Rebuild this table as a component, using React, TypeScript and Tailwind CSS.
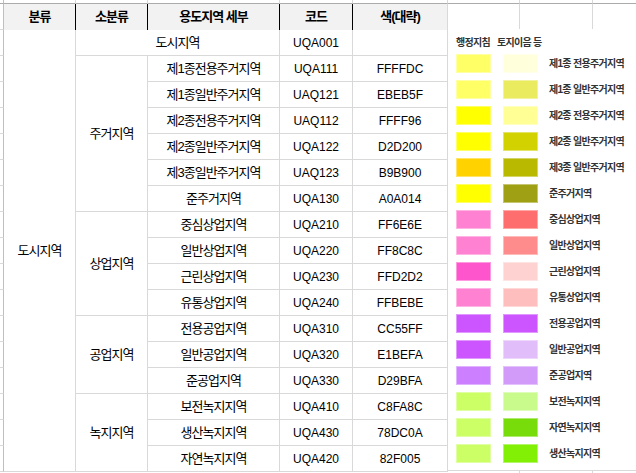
type Item = { name: string; code: string; hex: string };

type Group = { name: string; items: Item[] };

const groups: Group[] = [
  {
    name: '주거지역',
    items: [
      { name: '제1종전용주거지역', code: 'UQA111', hex: 'FFFFDC' },
      { name: '제1종일반주거지역', code: 'UAQ121', hex: 'EBEB5F' },
      { name: '제2종전용주거지역', code: 'UAQ112', hex: 'FFFF96' },
      { name: '제2종일반주거지역', code: 'UQA122', hex: 'D2D200' },
      { name: '제3종일반주거지역', code: 'UAQ123', hex: 'B9B900' },
      { name: '준주거지역', code: 'UQA130', hex: 'A0A014' },
    ],
  },
  {
    name: '상업지역',
    items: [
      { name: '중심상업지역', code: 'UQA210', hex: 'FF6E6E' },
      { name: '일반상업지역', code: 'UQA220', hex: 'FF8C8C' },
      { name: '근린상업지역', code: 'UQA230', hex: 'FFD2D2' },
      { name: '유통상업지역', code: 'UQA240', hex: 'FFBEBE' },
    ],
  },
  {
    name: '공업지역',
    items: [
      { name: '전용공업지역', code: 'UQA310', hex: 'CC55FF' },
      { name: '일반공업지역', code: 'UQA320', hex: 'E1BEFA' },
      { name: '준공업지역', code: 'UQA330', hex: 'D29BFA' },
    ],
  },
  {
    name: '녹지지역',
    items: [
      { name: '보전녹지지역', code: 'UQA410', hex: 'C8FA8C' },
      { name: '생산녹지지역', code: 'UQA430', hex: '78DC0A' },
      { name: '자연녹지지역', code: 'UQA420', hex: '82F005' },
    ],
  },
];

// legend picture pasted next to the table: 행정지침 colour / 토지이음 colour
const legend = [
  { label: '제1종 전용주거지역', a: 'bg-[#ffff66]', b: 'bg-[#ffffdc]' },
  { label: '제1종 일반주거지역', a: 'bg-[#ffff66]', b: 'bg-[#ebeb5f]' },
  { label: '제2종 전용주거지역', a: 'bg-[#ffff00]', b: 'bg-[#ffff96]' },
  { label: '제2종 일반주거지역', a: 'bg-[#ffff00]', b: 'bg-[#d2d200]' },
  { label: '제3종 일반주거지역', a: 'bg-[#ffd200]', b: 'bg-[#b9b900]' },
  { label: '준주거지역', a: 'bg-[#ffff00]', b: 'bg-[#a0a014]' },
  { label: '중심상업지역', a: 'bg-[#ff82d2]', b: 'bg-[#ff6e6e]' },
  { label: '일반상업지역', a: 'bg-[#ff82d2]', b: 'bg-[#ff8c8c]' },
  { label: '근린상업지역', a: 'bg-[#ff55cc]', b: 'bg-[#ffd2d2]' },
  { label: '유통상업지역', a: 'bg-[#ff82d2]', b: 'bg-[#ffbebe]' },
  { label: '전용공업지역', a: 'bg-[#cc55ff]', b: 'bg-[#cc55ff]' },
  { label: '일반공업지역', a: 'bg-[#cc55ff]', b: 'bg-[#e1befa]' },
  { label: '준공업지역', a: 'bg-[#cc80ff]', b: 'bg-[#d29bfa]' },
  { label: '보전녹지지역', a: 'bg-[#ccff66]', b: 'bg-[#c8fa8c]' },
  { label: '자연녹지지역', a: 'bg-[#ccff66]', b: 'bg-[#78dc0a]' },
  { label: '생산녹지지역', a: 'bg-[#ccff66]', b: 'bg-[#82f005]' },
];

const line = 'border-r border-b border-[#d9d9d9]';
const kr = 'text-[13px] tracking-[-1px]';

function ItemRow({ item }: { item: Item }) {
  return (
    <div className="flex h-[26px]">
      <div className={`${line} ${kr} flex w-[132px] items-center justify-center`}>{item.name}</div>
      <div className={`${line} flex w-[73px] items-center justify-center`}>{item.code}</div>
      <div className={`${line} flex w-[95px] items-center justify-center`}>{item.hex}</div>
    </div>
  );
}

export default function App() {
  const rowCount = 17;

  return (
    <div className="flex h-[473px] w-[636px] overflow-hidden bg-white font-['Liberation_Sans','Noto_Sans_CJK_KR',sans-serif] text-[12px] text-black">
      {/* row header slice on the left edge */}
      <div className="flex w-[4px] flex-col">
        <div className="h-[4px] border-r border-b border-r-[#bfbfbf] border-b-[#ababab]"></div>
        <div className="h-[26px] border-r border-b border-r-[#bfbfbf] border-b-[#d9d9d9]"></div>
        {Array.from({ length: rowCount }).map((_, i) => (
          <div key={i} className="h-[26px] border-r border-b border-r-[#bfbfbf] border-b-[#d9d9d9]"></div>
        ))}
      </div>

      {/* table */}
      <div className="flex w-[444px] flex-col">
        <div className="flex h-[4px]">
          {['w-[72px]', 'w-[72px]', 'w-[132px]', 'w-[73px]', 'w-[95px]'].map((w, i) => (
            <div key={i} className={`${w} border-r border-b border-r-[#d9d9d9] border-b-[#ababab]`}></div>
          ))}
        </div>

        {/* header */}
        <div className={`flex h-[26px] bg-[#f2f2f2] font-bold ${kr}`}>
          <div className="flex w-[72px] items-center justify-center border-r border-black">분류</div>
          <div className="flex w-[72px] items-center justify-center border-r border-black">소분류</div>
          <div className="flex w-[132px] items-center justify-center border-r border-black">용도지역 세부</div>
          <div className="flex w-[73px] items-center justify-center border-r border-black">코드</div>
          <div className="flex w-[95px] items-center justify-center border-r border-[#d9d9d9]">색(대략)</div>
        </div>

        {/* body */}
        <div className="flex">
          <div className={`${line} ${kr} flex w-[72px] items-center justify-center`}>도시지역</div>
          <div className="flex w-[372px] flex-col">
            <div className="flex h-[26px]">
              <div className={`${line} ${kr} flex w-[204px] items-center justify-center`}>도시지역</div>
              <div className={`${line} flex w-[73px] items-center justify-center`}>UQA001</div>
              <div className={`${line} w-[95px]`}></div>
            </div>
            {groups.map((g) => (
              <div key={g.name} className="flex">
                <div className={`${line} ${kr} flex w-[72px] items-center justify-center`}>{g.name}</div>
                <div className="flex flex-col">
                  {g.items.map((item) => (
                    <ItemRow key={item.code} item={item} />
                  ))}
                </div>
              </div>
            ))}
          </div>
        </div>
      </div>

      {/* legend picture over the empty columns */}
      <div className="flex flex-1 flex-col">
        <div className="flex h-[4px]">
          <div className="w-[72px] border-r border-b border-r-[#d9d9d9] border-b-[#ababab]"></div>
          <div className="w-[73px] border-r border-b border-r-[#d9d9d9] border-b-[#ababab]"></div>
          <div className="flex-1 border-b border-[#ababab]"></div>
        </div>
        <div className="flex h-[25px]">
          <div className="w-[72px] border-r border-[#d9d9d9]"></div>
          <div className="w-[73px] border-r border-[#d9d9d9]"></div>
        </div>

        <div className="h-[442px] border-b border-[#d9d9d9] bg-white pt-[7px] pl-[8px] text-[10px] text-[#333] tracking-[-0.7px]">
          <div className="flex h-[13px] items-center gap-[7px] font-bold">
            <span>행정지침</span>
            <span>토지이음 등</span>
          </div>
          <div className="mt-[5px] flex flex-col gap-[7px]">
            {legend.map((r) => (
              <div key={r.label} className="flex h-[19px] items-center">
                <div className={`h-[19px] w-[35px] border border-white/40 ${r.a}`}></div>
                <div className={`ml-[12px] h-[19px] w-[35px] border border-white/40 ${r.b}`}></div>
                <span className="ml-[11px] font-bold">{r.label}</span>
              </div>
            ))}
          </div>
        </div>

        <div className="flex flex-1">
          <div className="w-[72px] border-r border-[#d9d9d9]"></div>
          <div className="w-[73px] border-r border-[#d9d9d9]"></div>
        </div>
      </div>
    </div>
  );
}
